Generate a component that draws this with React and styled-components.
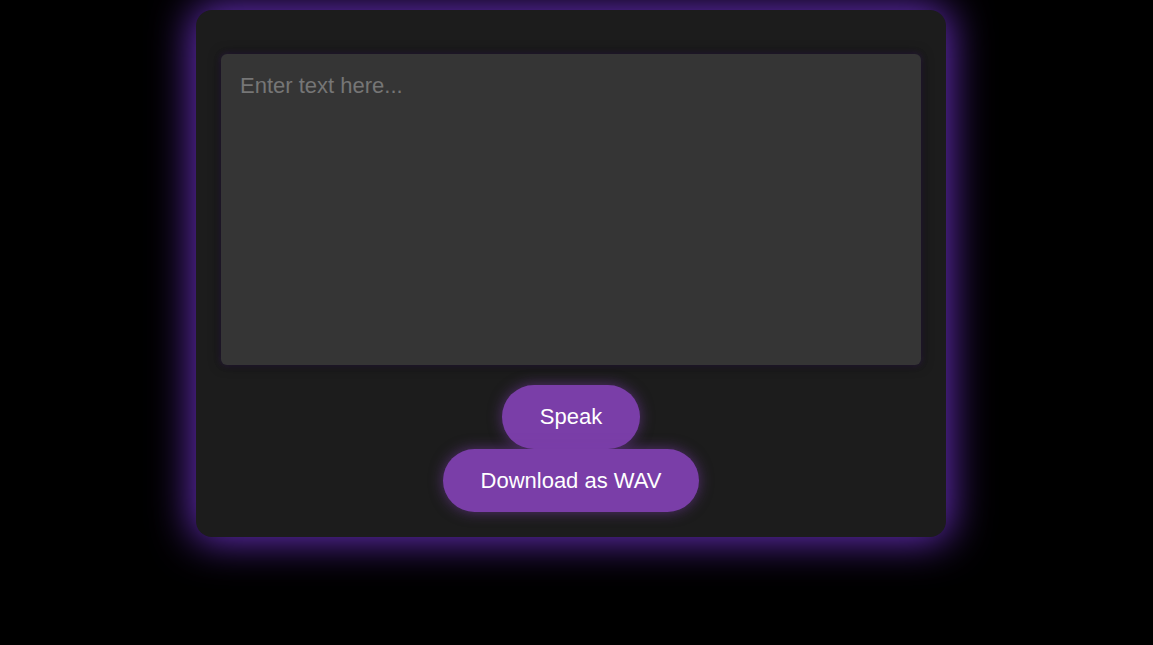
import styled, { createGlobalStyle } from "styled-components";

const GlobalStyle = createGlobalStyle`
  html, body {
    margin: 0;
    padding: 0;
    background: #000;
    font-family: "Liberation Sans", Arial, sans-serif;
  }
`;

function App() {
  return (
    <Page>
      <GlobalStyle />
      <Card>
        <TextArea placeholder="Enter text here..." />
        <Actions>
          <Button type="button">Speak</Button>
          <Button type="button">Download as WAV</Button>
        </Actions>
      </Card>
    </Page>
  );
}

const Page = styled.div`
  min-height: 100vh;
  display: flex;
  justify-content: center;
  align-items: flex-start;
  padding: 10px 11px 0 0;
  box-sizing: border-box;
`;

const Card = styled.div`
  width: 750px;
  box-sizing: border-box;
  padding: 44px 25px 25px;
  background: #1c1c1c;
  border-radius: 16px;
  box-shadow: 0 0 40px 4px rgba(110, 50, 200, 0.95);
  display: flex;
  flex-direction: column;
  align-items: center;
`;

const TextArea = styled.textarea`
  width: 100%;
  height: 311px;
  box-sizing: border-box;
  padding: 19px 19px;
  background: #353535;
  color: #ddd;
  border: none;
  border-radius: 6px;
  resize: none;
  outline: none;
  font-family: "Liberation Sans", Arial, sans-serif;
  font-size: 22px;
  box-shadow: 0 0 12px rgba(0, 0, 0, 0.6), 0 0 6px rgba(112, 52, 190, 0.35);

  &::placeholder {
    color: #767676;
  }
`;

const Actions = styled.div`
  margin-top: 20px;
  display: flex;
  flex-direction: column;
  align-items: center;
`;

const Button = styled.button`
  background: #7a3ea8;
  color: #fff;
  border: none;
  border-radius: 32px;
  padding: 19px 38px;
  font-family: "Liberation Sans", Arial, sans-serif;
  font-size: 22px;
  line-height: 25.5px;
  cursor: pointer;
  box-shadow: 0 0 14px rgba(122, 62, 168, 0.6);
`;

export default App;
